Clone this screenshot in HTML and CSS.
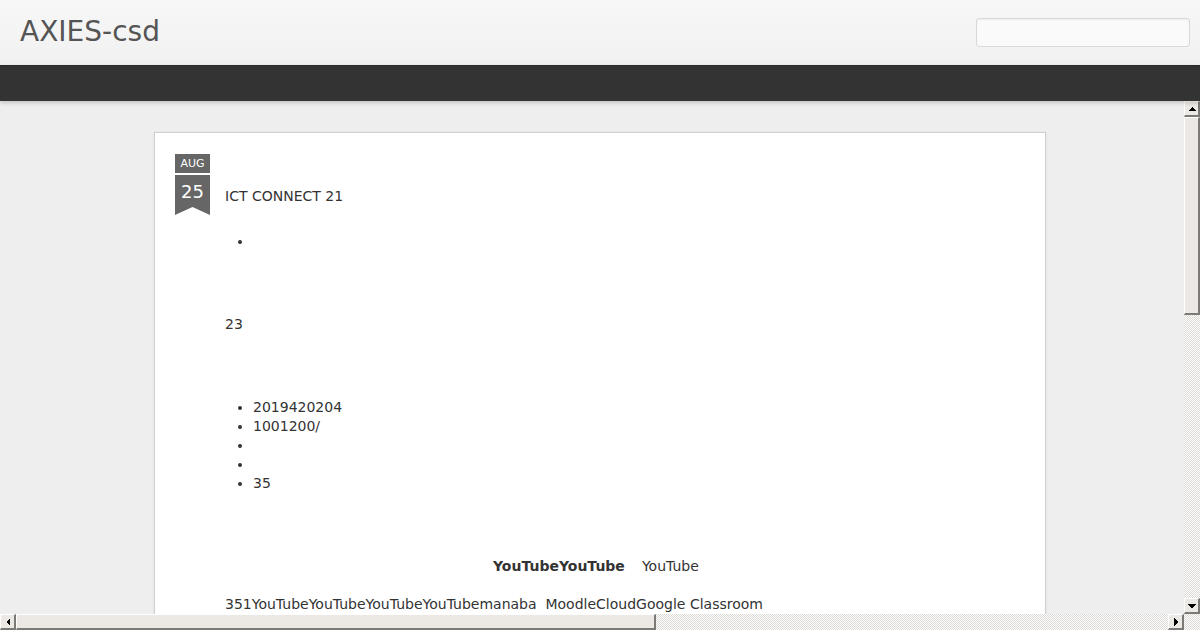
FILE: index.html
```html
<!DOCTYPE html>
<html lang="ja">
<head>
<meta charset="utf-8">
<title>AXIES-csd</title>
<link rel="stylesheet" href="styles.css">
</head>
<body>
<header class="header">
  <h1 class="site-title">AXIES-csd</h1>
  <input class="search" type="text" aria-label="search">
</header>
<nav class="navbar"></nav>
<div class="viewport">
  <main class="content">
    <article class="card">
      <div class="date-badge">
        <div class="month">AUG</div>
        <div class="day">25</div>
      </div>
      <div class="post">
        <h3 class="post-title">ICT CONNECT 21</h3>
        <ul class="list first-list">
          <li>&nbsp;</li>
        </ul>
        <p class="para gap">23</p>
        <ul class="list gap">
          <li>2019420204</li>
          <li>1001200/</li>
          <li>&nbsp;</li>
          <li>&nbsp;</li>
          <li>35</li>
        </ul>
        <p class="para gap centered"><strong>YouTubeYouTube</strong><span class="after">YouTube</span></p>
        <p class="para tight">351YouTubeYouTubeYouTubeYouTubemanaba&nbsp; MoodleCloudGoogle Classroom</p>
      </div>
    </article>
  </main>
  <div class="vbar" aria-hidden="true">
    <div class="sb-btn arrow-up"></div>
    <div class="sb-thumb vthumb"></div>
    <div class="sb-track"></div>
    <div class="sb-btn arrow-down"></div>
  </div>
  <div class="hbar" aria-hidden="true">
    <div class="sb-btn arrow-left"></div>
    <div class="sb-thumb hthumb"></div>
    <div class="sb-track"></div>
    <div class="sb-btn arrow-right"></div>
  </div>
  <div class="sb-corner" aria-hidden="true"></div>
</div>
</body>
</html>
```

FILE: styles.css
```css
* { box-sizing: border-box; }
html, body {
  margin: 0;
  padding: 0;
  height: 100%;
  overflow: hidden;
}
body {
  font-family: "DejaVu Sans", "Noto Sans CJK JP", sans-serif;
  font-size: 14px;
  color: #333;
  background: #eeeeee;
}
.header {
  height: 65px;
  background: linear-gradient(#f7f7f7, #f1f1f1);
  display: flex;
  align-items: flex-start;
  justify-content: space-between;
  padding: 0 10px 0 20px;
}
.site-title {
  margin: 14px 0 0 0;
  font-weight: normal;
  font-size: 28px;
  line-height: 36px;
  color: #555;
}
.search {
  margin-top: 18px;
  width: 214px;
  height: 29px;
  border: 1px solid #d9d9d9;
  border-radius: 3px;
  background: #fafafa;
  box-shadow: inset 0 1px 2px rgba(0,0,0,0.06);
  outline: none;
}
.navbar {
  height: 36px;
  background: #333;
  border-top: 1px solid #2b2b2b;
  box-shadow: 0 2px 4px rgba(0,0,0,0.18);
  position: relative;
  z-index: 1;
}
.viewport {
  height: 529px;
  width: 1200px;
  display: grid;
  grid-template-columns: 1184px 16px;
  grid-template-rows: 513px 16px;
  background: #eeeeee;
}
.content {
  overflow: hidden;
  padding-top: 31px;
  padding-left: 154px;
}
.vbar, .hbar {
  display: flex;
  background: repeating-conic-gradient(#fdfdfd 0 25%, #dedbd6 0 50%) 0 0 / 2px 2px;
}
.vbar { flex-direction: column; }
.hbar { flex-direction: row; }
.sb-corner {
  background: repeating-conic-gradient(#fdfdfd 0 25%, #dedbd6 0 50%) 0 0 / 2px 2px;
}
.sb-track { flex: 1; }
.sb-btn, .sb-thumb {
  flex: none;
  background-color: #ece9e4;
  border-top: 1px solid #fff;
  border-left: 1px solid #fff;
  border-right: 2px solid #7c7a76;
  border-bottom: 2px solid #7c7a76;
  background-repeat: no-repeat;
  background-position: center;
}
.sb-btn { width: 16px; height: 16px; }
.vthumb { height: 198px; width: 16px; }
.hthumb { width: 640px; height: 16px; }
.arrow-up {
  background-image: conic-gradient(from 135deg at 50% 0, #000 90deg, transparent 0);
  background-size: 8px 4px;
}
.arrow-down {
  background-image: conic-gradient(from -45deg at 50% 100%, #000 90deg, transparent 0);
  background-size: 8px 4px;
}
.arrow-left {
  background-image: conic-gradient(from 45deg at 0 50%, #000 90deg, transparent 0);
  background-size: 4px 8px;
}
.arrow-right {
  background-image: conic-gradient(from 225deg at 100% 50%, #000 90deg, transparent 0);
  background-size: 4px 8px;
}
.card {
  width: 892px;
  min-height: 1150px;
  background: #fff;
  border: 1px solid #cfcfcf;
  box-shadow: 0 0 2px rgba(0,0,0,0.08);
  padding: 21px 20px;
  display: flex;
  gap: 15px;
  align-items: flex-start;
}
.date-badge {
  width: 35px;
  flex: none;
  color: #fff;
  text-align: center;
}
.month {
  background: #666;
  height: 19px;
  font-size: 11px;
  line-height: 20px;
}
.day {
  margin-top: 2px;
  background: #666;
  height: 40px;
  font-size: 18px;
  line-height: 33px;
  clip-path: polygon(0 0, 100% 0, 100% 100%, 50% 80%, 0 100%);
}
.post {
  flex: 1;
  line-height: 19px;
}
.post-title {
  margin: 33px 0 0 0;
  font-size: 14px;
  font-weight: normal;
  line-height: 19px;
}
.list {
  margin: 0;
  padding-left: 28px;
}
.first-list { margin-top: 26px; }
.para { margin: 0; }
.gap { margin-top: 64px; }
.tight { margin-top: 19px; }
.centered { padding-left: 268px; }
.centered strong { color: #333; }
.after { margin-left: 17px; }
```
